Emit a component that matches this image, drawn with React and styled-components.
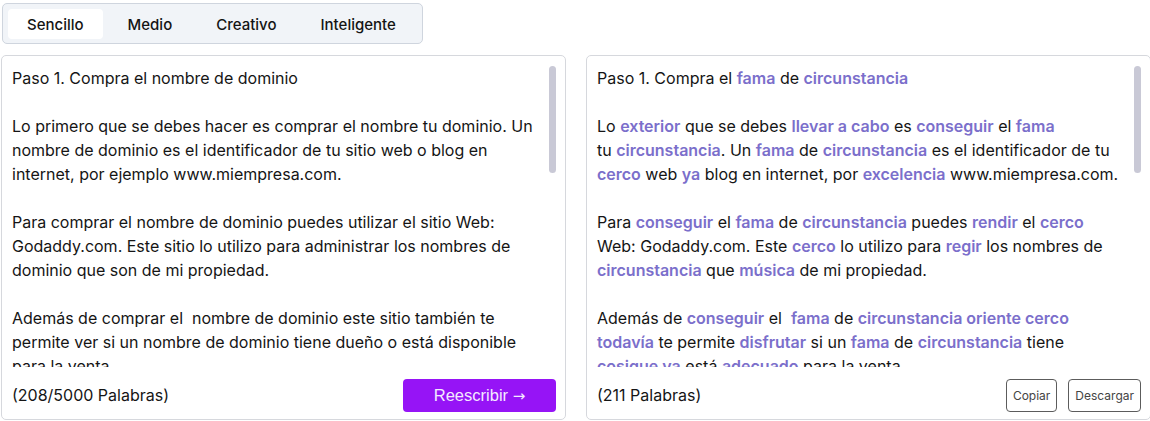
import React from 'react'
import styled, { createGlobalStyle } from 'styled-components'

const GlobalStyle = createGlobalStyle`
    body {
        margin: 0;
        background: #fff;
        font-family: Inter, 'Liberation Sans', sans-serif;
        color: #151515;
    }
`;

const Page = styled.div`
    width: 1170px;
    padding: 3px 0 0 1px;
    display: flex;
    flex-direction: column;
    gap: 11px;
`;

const Tabs = styled.div`
    align-self: flex-start;
    margin-left: 1px;
    display: flex;
    gap: 6px;
    padding: 5px 7px 4px 5px;
    background: #f1f4f8;
    border: 1px solid #cfd5de;
    border-radius: 5px;
`;

const Tab = styled.button`
    border: none;
    height: 30px;
    padding: 0 19px;
    border-radius: 4px;
    font-family: Inter, sans-serif;
    font-size: 15px;
    font-weight: 500;
    color: #141414;
    background: ${p => (p.$active ? '#fff' : 'transparent')};
`;

const Columns = styled.div`
    display: grid;
    grid-template-columns: 565px 565px;
    gap: 20px;
`;

const Panel = styled.div`
    height: 365px;
    border: 1px solid #d6d8dd;
    border-radius: 5px;
    display: flex;
    flex-direction: column;
    box-sizing: border-box;
`;

const Body = styled.div`
    position: relative;
    height: 311px;
    overflow: hidden;
    padding: 10px 24px 0 10px;
    box-sizing: border-box;
    font-size: 16px;
    line-height: 24px;
`;

const Line = styled.div`
    white-space: pre;
    min-height: 24px;
`;

const Hl = styled.b`
    color: #7b6fcb;
    font-weight: 600;
`;

const Thumb = styled.div`
    position: absolute;
    top: 10px;
    right: 9px;
    width: 7px;
    height: 107px;
    border-radius: 4px;
    background: #c9c9d6;
`;

const Footer = styled.div`
    flex: 1;
    display: flex;
    align-items: center;
    justify-content: space-between;
    padding: 4px 9px 0 10px;
    font-size: 16px;
`;

const Rewrite = styled.button`
    width: 153px;
    height: 33px;
    border: none;
    border-radius: 4px;
    background: #9614f6;
    color: #f4eaff;
    font-family: 'Liberation Sans', Arial, sans-serif;
    font-size: 16.5px;
`;

const Arrow = styled.span`
    font-family: 'DejaVu Sans', sans-serif;
    font-size: 15px;
`;

const Actions = styled.div`
    display: flex;
    gap: 11px;
`;

const Small = styled.button`
    height: 33px;
    padding: 0 6px;
    border: 1px solid #5c5c5c;
    border-radius: 4px;
    background: #fff;
    color: #444;
    font-family: Inter, sans-serif;
    font-size: 12px;
`;

const original = [
    'Paso 1. Compra el nombre de dominio',
    '',
    'Lo primero que se debes hacer es comprar el nombre tu dominio. Un',
    'nombre de dominio es el identificador de tu sitio web o blog en',
    'internet, por ejemplo www.miempresa.com.',
    '',
    'Para comprar el nombre de dominio puedes utilizar el sitio Web:',
    'Godaddy.com. Este sitio lo utilizo para administrar los nombres de',
    'dominio que son de mi propiedad.',
    '',
    'Además de comprar el  nombre de dominio este sitio también te',
    'permite ver si un nombre de dominio tiene dueño o está disponible',
    'para la venta.',
];

// words wrapped in [] are the rewritten ones
const rewritten = [
    'Paso 1. Compra el [fama] de [circunstancia]',
    '',
    'Lo [exterior] que se debes [llevar a cabo] es [conseguir] el [fama]',
    'tu [circunstancia]. Un [fama] de [circunstancia] es el identificador de tu',
    '[cerco] web [ya] blog en internet, por [excelencia] www.miempresa.com.',
    '',
    'Para [conseguir] el [fama] de [circunstancia] puedes [rendir] el [cerco]',
    'Web: Godaddy.com. Este [cerco] lo utilizo para [regir] los nombres de',
    '[circunstancia] que [música] de mi propiedad.',
    '',
    'Además de [conseguir] el  [fama] de [circunstancia oriente cerco]',
    '[todavía] te permite [disfrutar] si un [fama] de [circunstancia] tiene',
    '[cosigue ya] está [adecuado] para la venta.',
];

const renderLine = (text) =>
    text.split(/(\[[^\]]+\])/).map((part, i) =>
        part.startsWith('[') ? <Hl key={i}>{part.slice(1, -1)}</Hl> : part
    );

const App = () => (
    <Page>
        <GlobalStyle />
        <Tabs>
            <Tab $active>Sencillo</Tab>
            <Tab>Medio</Tab>
            <Tab>Creativo</Tab>
            <Tab>Inteligente</Tab>
        </Tabs>
        <Columns>
            <Panel>
                <Body>
                    {original.map((l, i) => <Line key={i}>{l}</Line>)}
                    <Thumb />
                </Body>
                <Footer>
                    <span>(208/5000 Palabras)</span>
                    <Rewrite>Reescribir <Arrow>→</Arrow></Rewrite>
                </Footer>
            </Panel>
            <Panel>
                <Body>
                    {rewritten.map((l, i) => <Line key={i}>{renderLine(l)}</Line>)}
                    <Thumb />
                </Body>
                <Footer>
                    <span>(211 Palabras)</span>
                    <Actions>
                        <Small>Copiar</Small>
                        <Small>Descargar</Small>
                    </Actions>
                </Footer>
            </Panel>
        </Columns>
    </Page>
)

export default App
